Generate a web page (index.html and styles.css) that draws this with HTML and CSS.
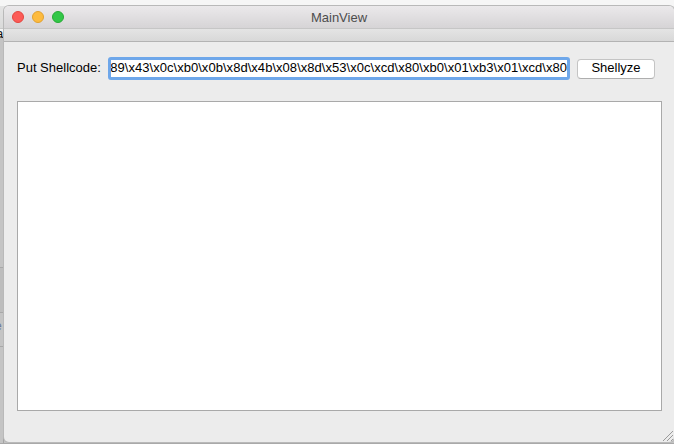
FILE: index.html
```html
<!DOCTYPE html>
<html>
<head>
<meta charset="utf-8">
<link rel="stylesheet" href="styles.css">
</head>
<body>
<div class="desk">
  <div class="bgwin">
    <div class="bg-top"></div>
    <div class="bg-bar"><span class="bg-glyph">a</span></div>
    <div class="bg-side">
      <div class="bg-pane p1"></div>
      <div class="bg-pane p2"></div>
      <div class="bg-pane p3"><span class="bg-glyph2">e</span></div>
      <div class="bg-pane p4"></div>
    </div>
  </div>
  <div class="win">
    <div class="titlebar">
      <div class="lights">
        <span class="light red"></span>
        <span class="light yellow"></span>
        <span class="light green"></span>
      </div>
      <div class="title">MainView</div>
    </div>
    <div class="toolbar"></div>
    <div class="content">
      <div class="row">
        <label class="label">Put Shellcode:</label>
        <div class="field"><span class="field-text">89\x43\x0c\xb0\x0b\x8d\x4b\x08\x8d\x53\x0c\xcd\x80\xb0\x01\xb3\x01\xcd\x80</span></div>
        <div class="button">Shellyze</div>
      </div>
      <div class="output"></div>
    </div>
    <svg class="grip" width="11" height="11" viewBox="0 0 11 11">
      <line x1="1" y1="11" x2="11" y2="1" stroke="#9a9a9a" stroke-width="1"/>
      <line x1="5" y1="11" x2="11" y2="5" stroke="#9a9a9a" stroke-width="1"/>
      <line x1="9" y1="11" x2="11" y2="9" stroke="#9a9a9a" stroke-width="1"/>
    </svg>
  </div>
</div>
</body>
</html>
```
FILE: styles.css
```css
html, body {
  margin: 0;
  padding: 0;
}
body {
  font-family: "Liberation Sans", Arial, sans-serif;
  font-size: 13px;
  color: #000;
  background: #c4c4c4;
}
.desk {
  position: relative;
  width: 674px;
  height: 444px;
  overflow: hidden;
  background: #a9a9a9;
}
.bgwin {
  position: absolute;
  left: 0;
  top: 0;
  width: 674px;
  height: 443px;
  display: flex;
  flex-direction: column;
  background: #c4c4c4;
}
.bg-top {
  height: 28px;
  background: linear-gradient(#f6f6f6 0, #f6f6f6 6px, #e4e4e4 6px, #dadada 28px);
  border-bottom: 1px solid #c8c8c8;
  flex: none;
}
.bg-bar {
  height: 7px;
  background: #f4f4f4;
  position: relative;
  flex: none;
  border-bottom: 1px solid #b0b0b0;
}
.bg-glyph {
  position: absolute;
  left: -4px;
  top: -3px;
  font-size: 13px;
  color: #111;
}
.bg-side {
  flex: 1;
  display: flex;
  flex-direction: column;
  border-right: 1px solid #a4a4a4;
  width: 3px;
}
.bg-pane {
  border-bottom: 1px solid #a8a8a8;
  position: relative;
}
.p1 { height: 230px; }
.p2 { height: 44px; background: #bdbdbd; }
.p3 { height: 33px; }
.p4 { flex: 1; border-bottom: 0; }
.bg-glyph2 {
  position: absolute;
  left: -5px;
  top: 6px;
  font-size: 12px;
  color: #6a7a9a;
}
.win {
  position: absolute;
  left: 4px;
  top: 6px;
  width: 670px;
  height: 436px;
  background: #ececec;
  border-radius: 5px 5px 5px 5px;
  box-shadow: 0 0 0 1px #b9b9b9;
  display: flex;
  flex-direction: column;
  overflow: hidden;
}
.titlebar {
  height: 22px;
  flex: none;
  position: relative;
  display: flex;
  align-items: center;
  justify-content: center;
  background: linear-gradient(#ebe9eb, #d6d4d6);
  border-bottom: 1px solid #c6c6c6;
}
.lights {
  position: absolute;
  left: 8px;
  top: 5px;
  display: flex;
  gap: 8px;
}
.light {
  width: 12px;
  height: 12px;
  border-radius: 50%;
  box-sizing: border-box;
}
.red { background: #fc5b57; border: 1px solid #e2463f; }
.yellow { background: #fdbb3f; border: 1px solid #e1a130; }
.green { background: #33c748; border: 1px solid #27aa35; }
.title {
  color: #4d4d4d;
  font-size: 13px;
  line-height: 16px;
  padding-top: 1px;
}
.toolbar {
  height: 12px;
  flex: none;
  background: linear-gradient(#e4e4e4, #d8d8d8);
  border-bottom: 1px solid #b3b3b3;
}
.content {
  flex: 1;
  display: flex;
  flex-direction: column;
  padding: 15px 0 0 13px;
}
.row {
  display: flex;
  align-items: center;
  height: 23px;
}
.label {
  width: 84px;
  margin-right: 7px;
  white-space: nowrap;
  padding-bottom: 2px;
}
.field {
  width: 462px;
  height: 23px;
  box-sizing: border-box;
  border: 3px solid #6ea7ea;
  border-radius: 3px;
  background: #fff;
  display: flex;
  justify-content: flex-end;
  align-items: center;
  overflow: hidden;
  white-space: nowrap;
}
.field-text {
  flex: none;
  line-height: 15px;
  padding-bottom: 2px;
  letter-spacing: 0.04px;
}
.button {
  margin-left: 7px;
  width: 78px;
  height: 20px;
  box-sizing: border-box;
  border: 1px solid #c4c4c4;
  border-bottom-color: #aeaeae;
  border-radius: 4px;
  background: #fff;
  display: flex;
  align-items: center;
  justify-content: center;
  padding-bottom: 2px;
}
.output {
  margin-top: 21px;
  width: 645px;
  height: 310px;
  box-sizing: border-box;
  border: 1px solid #a9a9a9;
  background: #fff;
}
.grip {
  position: absolute;
  right: 1px;
  bottom: 1px;
}
```
